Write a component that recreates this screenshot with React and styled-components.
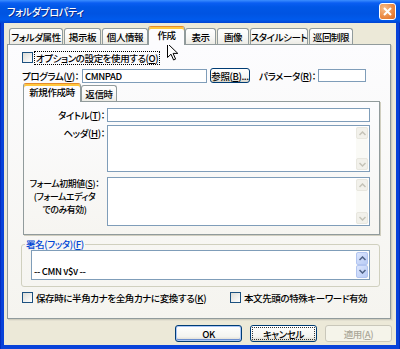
import styled, { createGlobalStyle, css } from 'styled-components'

const GlobalStyle = createGlobalStyle`
  html, body { margin: 0; padding: 0; background: #fff; }
  body {
    font-family: "Noto Sans CJK JP", "Noto Sans", sans-serif;
    font-size: 9.5px;
    font-weight: 500;
    letter-spacing: -0.4px;
    line-height: 12px;
    font-feature-settings: "palt";
    color: #000;
  }
  u { text-underline-offset: 1px; }
`

const Window = styled.div`
  position: relative;
  width: 400px;
  height: 349px;
  display: flex;
  flex-direction: column;
  background: linear-gradient(90deg, #0019A8 0, #0842D9 1px, #0842D9 399px, #001C9C 400px);
  overflow: hidden;
`

const TitleBar = styled.div`
  height: 23px;
  flex: none;
  display: flex;
  align-items: center;
  justify-content: space-between;
  padding: 0 4px 0 7px;
  background: linear-gradient(#3C8EFF 0, #0A5EF2 3px, #0057E6 7px, #0054E2 60%, #005AEC 85%, #0043D2 100%);
`

const Title = styled.span`
  color: #fff;
  font-size: 10px;
  letter-spacing: -0.3px;
  text-shadow: 1px 1px 0 #0A2A8C;
`

const CloseButton = styled.div`
  width: 17px;
  height: 17px;
  box-sizing: border-box;
  border: 1px solid #fff;
  border-radius: 3px;
  background: radial-gradient(circle at 30% 30%, #F7BD8A, #E9843C 65%, #D66A26);
  display: flex;
  align-items: center;
  justify-content: center;
`

const Body = styled.div`
  flex: 1;
  margin: 0 4px 4px;
  padding: 3px 0 0 3px;
  background: #ECE9D8;
  display: flex;
  flex-direction: column;
`

const TabStrip = styled.div`
  height: 18px;
  display: flex;
  align-items: flex-end;
  padding-left: ${p => p.$pl || 0}px;
`

const Tab = styled.div`
  position: relative;
  box-sizing: border-box;
  width: ${p => p.$w}px;
  display: flex;
  align-items: center;
  justify-content: center;
  white-space: nowrap;
  border: 1px solid #919B9C;
  border-bottom: none;
  border-radius: 3px 3px 0 0;
  ${p => p.$active
    ? css`
      height: 19px;
      margin: 0 0 -1px -1px;
      z-index: 1;
      padding-bottom: 2px;
      background: #FCFCFE;
      border-top: 1px solid #E68B2C;
      box-shadow: inset 0 2px 0 #FFC73C;
    `
    : css`
      height: 16px;
      margin-right: 1px;
      background: linear-gradient(#FFFFFF, #F8F8F6 55%, #ECEBE5);
    `}
`

const TabPanel = styled.div`
  width: 384px;
  height: 275px;
  box-sizing: border-box;
  border: 1px solid #919B9C;
  background: linear-gradient(#FCFCFE, #F5F4EF);
  box-shadow: 1px 1px 0 #D0CEBF, 2px 2px 0 #E3E0D1;
  padding: 6px 0 0 14px;
  display: flex;
  flex-direction: column;
`

const Row = styled.div`
  display: flex;
  align-items: center;
  height: ${p => p.$h}px;
  margin-top: ${p => p.$mt || 0}px;
`

const CheckItem = styled.div`
  display: flex;
  align-items: center;
  width: ${p => (p.$w ? `${p.$w}px` : 'auto')};
`

const Check = styled.div`
  width: 11px;
  height: 11px;
  box-sizing: border-box;
  border: 1px solid #1C5180;
  background: linear-gradient(135deg, #DCDCD7, #FFFFFF);
  flex: none;
`

const CheckLabel = styled.span`
  margin-left: 2px;
  padding: 0 1px;
  white-space: nowrap;
  outline: ${p => (p.$focus ? '1px dotted #000' : 'none')};
`

const Label = styled.span`
  white-space: nowrap;
  margin-left: ${p => p.$ml || 0}px;
`

const TextBox = styled.div`
  box-sizing: border-box;
  width: ${p => p.$w}px;
  height: ${p => p.$h}px;
  margin-left: ${p => p.$ml || 0}px;
  border: 1px solid #7F9DB9;
  background: #fff;
  padding-left: 2px;
  display: flex;
  align-items: center;
  flex: none;
`

const Button = styled.button`
  box-sizing: border-box;
  width: ${p => p.$w}px;
  height: ${p => p.$h}px;
  margin-left: ${p => p.$ml || 0}px;
  padding: 0;
  font: inherit;
  letter-spacing: inherit;
  color: #000;
  border: 1px solid #003C74;
  border-radius: 3px;
  background: linear-gradient(#FFFFFF, #F4F4F0 70%, #D8D4C8);
  display: flex;
  align-items: center;
  justify-content: center;
  white-space: nowrap;
  flex: none;
  ${p => p.$default && css`
    box-shadow: inset 0 0 0 1px #A9C6F7, inset 0 -1px 0 1px #6D8FCF;
  `}
  ${p => p.$focus && css`
    outline: 1px dotted #333;
    outline-offset: -3px;
  `}
  &:disabled {
    color: #ACA899;
    border-color: #C9C7BA;
    background: #F5F4EA;
  }
`

const SubPanel = styled.div`
  width: 357px;
  height: 134px;
  margin-left: 1px;
  box-sizing: border-box;
  border: 1px solid #919B9C;
  background: linear-gradient(#FCFCFE, #F6F5F1);
  box-shadow: 1px 1px 0 #D0CEBF;
  padding-top: 6px;
  display: flex;
  flex-direction: column;
`

const FieldRow = styled.div`
  display: flex;
  align-items: ${p => (p.$center ? 'center' : 'flex-start')};
  margin-top: ${p => p.$mt || 0}px;
`

const FieldLabel = styled.div`
  width: 83px;
  box-sizing: border-box;
  padding: ${p => p.$pt || 0}px 2px 0 0;
  text-align: right;
  line-height: 12px;
  white-space: nowrap;
  flex: none;
`

const NoteLabel = styled(FieldLabel)`
  text-align: center;
  font-size: 8.9px;
  line-height: 13px;
`

const EditBox = styled.div`
  box-sizing: border-box;
  width: ${p => p.$w}px;
  height: ${p => p.$h}px;
  border: 1px solid #7F9DB9;
  background: #fff;
  display: flex;
  justify-content: space-between;
  flex: none;
`

const EditText = styled.div`
  padding: 2px 2px;
  white-space: pre;
  line-height: 12px;
`

const Track = styled.div`
  width: 12px;
  margin: 1px 1px 1px auto;
  display: flex;
  flex-direction: column;
  justify-content: space-between;
  background: #FAFAF6;
`

const ScrollButton = styled.div`
  height: ${p => p.$h}px;
  box-sizing: border-box;
  border-radius: 2px;
  display: flex;
  align-items: center;
  justify-content: center;
  ${p => p.$active
    ? css`
      background: linear-gradient(135deg, #DCE6FD, #B9CCF6);
      border: 1px solid #B2C5F1;
    `
    : css`
      background: #F2F1EB;
      border: 1px solid #E8E7DF;
    `}
`

const GroupBox = styled.fieldset`
  width: 359px;
  box-sizing: border-box;
  margin: 4px 0 0 -1px;
  padding: 0 9px 6px;
  border: 1px solid #D0D0BF;
  border-radius: 3px;
  min-width: 0;
`

const Legend = styled.legend`
  color: #0046D5;
  padding: 0 1px;
  margin-left: -6px;
  line-height: 11px;
`

const ButtonRow = styled.div`
  display: flex;
  justify-content: flex-end;
  gap: 8px;
  margin-top: 6px;
  padding-right: 4px;
`

const Cursor = styled.svg`
  position: absolute;
  left: 167px;
  top: 43px;
`

const tabs = [
  { label: 'フォルダ属性', w: 54 },
  { label: '掲示板', w: 37 },
  { label: '個人情報', w: 46 },
  { label: '作成', w: 37, active: true },
  { label: '表示', w: 31 },
  { label: '画像', w: 32 },
  { label: 'スタイルシート', w: 58 },
  { label: '巡回制限', w: 44 },
]

function Chevron({ down, color }) {
  return (
    <svg width="7" height="5" viewBox="0 0 7 5">
      <polyline
        points={down ? '0.5,1 3.5,4 6.5,1' : '0.5,4 3.5,1 6.5,4'}
        fill="none"
        stroke={color}
        strokeWidth="1.5"
      />
    </svg>
  )
}

function Scrollbar({ active }) {
  const color = active ? '#4D6185' : '#C5C3B8'
  const h = active ? 13 : 12
  return (
    <Track>
      <ScrollButton $active={active} $h={h}><Chevron color={color} /></ScrollButton>
      <ScrollButton $active={active} $h={h}><Chevron down color={color} /></ScrollButton>
    </Track>
  )
}

export default function App() {
  return (
    <>
      <GlobalStyle />
      <Window>
        <TitleBar>
          <Title>フォルダプロパティ</Title>
          <CloseButton>
            <svg width="9" height="9" viewBox="0 0 9 9">
              <path d="M1 1L8 8M8 1L1 8" stroke="#fff" strokeWidth="2" />
            </svg>
          </CloseButton>
        </TitleBar>
        <Body>
          <TabStrip $pl={2}>
            {tabs.map(t => (
              <Tab key={t.label} $w={t.w} $active={t.active}>{t.label}</Tab>
            ))}
          </TabStrip>
          <TabPanel>
            <Row $h={13}>
              <Check />
              <CheckLabel $focus>オプションの設定を使用する(<u>O</u>)</CheckLabel>
            </Row>
            <Row $h={15} $mt={4}>
              <Label>プログラム(<u>V</u>)：</Label>
              <TextBox $w={125} $h={14} $ml={3}>CMNPAD</TextBox>
              <Button $w={40} $h={15} $ml={3}>参照(<u>B</u>)...</Button>
              <Label $ml={9}>パラメータ(<u>R</u>)：</Label>
              <TextBox $w={48} $h={13} $ml={2} />
            </Row>
            <TabStrip $pl={2}>
              <Tab $w={58} $active>新規作成時</Tab>
              <Tab $w={36}>返信時</Tab>
            </TabStrip>
            <SubPanel>
              <FieldRow $center>
                <FieldLabel>タイトル(<u>T</u>)：</FieldLabel>
                <TextBox $w={263} $h={14} />
              </FieldRow>
              <FieldRow $mt={3}>
                <FieldLabel $pt={2}>ヘッダ(<u>H</u>)：</FieldLabel>
                <EditBox $w={263} $h={47}>
                  <Scrollbar />
                </EditBox>
              </FieldRow>
              <FieldRow $mt={5}>
                <NoteLabel>
                  フォーム初期値(<u>S</u>)：<br />(フォームエディタ<br />でのみ有効)
                </NoteLabel>
                <EditBox $w={263} $h={49}>
                  <Scrollbar />
                </EditBox>
              </FieldRow>
            </SubPanel>
            <GroupBox>
              <Legend>署名(フッタ)(<u>F</u>)</Legend>
              <EditBox $w={339} $h={30}>
                <EditText>{'\n-- CMN v$v --'}</EditText>
                <Scrollbar active />
              </EditBox>
            </GroupBox>
            <Row $h={13} $mt={4}>
              <CheckItem $w={208}>
                <Check />
                <CheckLabel>保存時に半角カナを全角カナに変換する(<u>K</u>)</CheckLabel>
              </CheckItem>
              <CheckItem>
                <Check />
                <CheckLabel>本文先頭の特殊キーワード有効</CheckLabel>
              </CheckItem>
            </Row>
          </TabPanel>
          <ButtonRow>
            <Button $w={67} $h={17} $default>OK</Button>
            <Button $w={67} $h={17} $focus>キャンセル</Button>
            <Button $w={67} $h={17} disabled>適用(<u>A</u>)</Button>
          </ButtonRow>
        </Body>
        <Cursor width="12" height="18" viewBox="0 0 12 18">
          <path d="M0.5 0.5 L0.5 14.5 L4 11.2 L6.6 17 L8.6 16.1 L6.1 10.4 L10.8 10.4 Z" fill="#fff" stroke="#000" strokeWidth="1" />
        </Cursor>
      </Window>
    </>
  )
}
